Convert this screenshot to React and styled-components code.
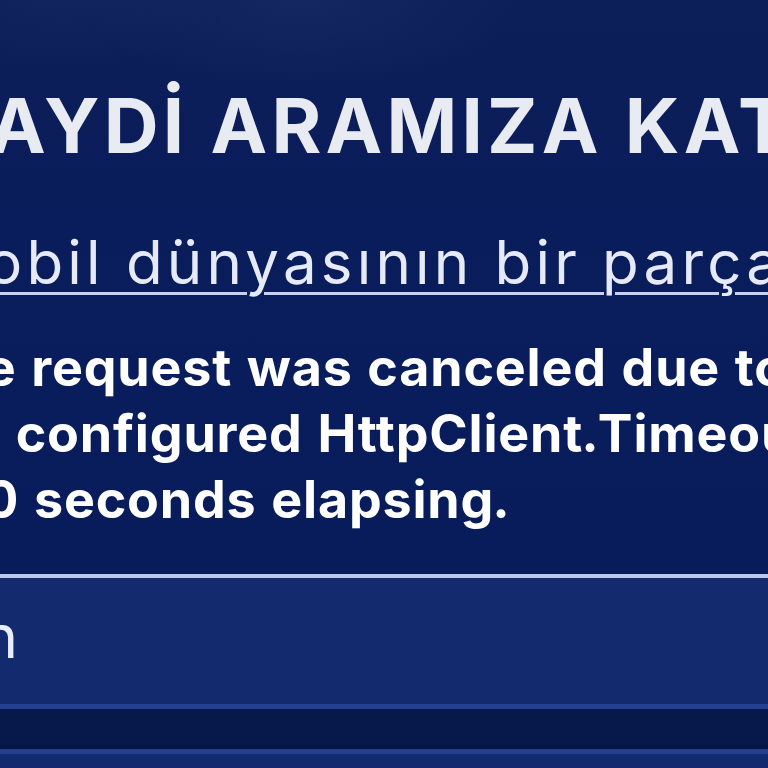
import React from "react";
import styled, { createGlobalStyle } from "styled-components";

const Global = createGlobalStyle`
  html, body { margin: 0; padding: 0; background: #0a1d5b; }
  body { font-family: Inter, "Noto Sans", sans-serif; }
  * { box-sizing: border-box; }
`;

const Page = styled.div`
  width: 768px;
  height: 768px;
  overflow: hidden;
  display: flex;
  flex-direction: column;
  background:
    radial-gradient(ellipse 220px 90px at 300px 0px, rgba(36, 54, 110, 0.35), rgba(36, 54, 110, 0) 100%),
    radial-gradient(ellipse 160px 70px at 60px 0px, rgba(36, 54, 110, 0.22), rgba(36, 54, 110, 0) 100%),
    linear-gradient(180deg, #0d1f57 0px, #0a1d5b 180px, #081c5c 574px);
`;

const Hero = styled.section`
  display: flex;
  flex-direction: column;
  padding-top: 87px;
  flex: 0 0 auto;
`;

const Line = styled.div`
  white-space: nowrap;
  margin-left: ${(p) => p.$shift}px;
`;

const Heading = styled(Line)`
  font-size: 76px;
  line-height: 76px;
  font-weight: 700;
  color: #e9ebf3;
  letter-spacing: 4.2px;
`;

const Subtitle = styled(Line)`
  margin-top: 69px;
  font-size: 60px;
  line-height: 60px;
  font-weight: 400;
  color: #e6eaf8;
  letter-spacing: 4.2px;
  text-decoration: underline;
  text-decoration-color: #c8d0f0;
  text-decoration-thickness: 3px;
  text-underline-offset: 8px;
`;

const ErrorBox = styled(Line)`
  margin-top: 43px;
  font-size: 52px;
  line-height: 66px;
  font-weight: 700;
  letter-spacing: 0.8px;
  color: #ffffff;
  font-variant-numeric: tabular-nums;
`;

const Divider = styled.div`
  margin-top: 40px;
  height: 6px;
  border-top: 1px solid #0f1a4e;
  border-bottom: 1px solid #1a2a66;
  background: #b9c7f0;
`;

const InputPanel = styled.div`
  height: 130px;
  background: #132b6e;
  border-bottom: 5px solid #24408f;
  display: flex;
  align-items: center;
`;

const InputEdge = styled.div`
  width: 18px;
  display: flex;
  justify-content: flex-end;
  padding-bottom: 12px;
`;

const InputText = styled.span`
  white-space: nowrap;
  font-size: 60px;
  line-height: 60px;
  font-weight: 400;
  color: #e8edff;
`;

const Band = styled.div`
  flex: 0 0 auto;
  height: 45px;
  background: linear-gradient(180deg, #07184b 0%, #07184b 85%, #051340 100%);
  border-bottom: 5px solid #24408f;
`;

const Rest = styled.div`
  flex: 1 1 auto;
  background: #132b6e;
`;

export default function App() {
  return (
    <>
      <Global />
      <Page>
        <Hero>
          <Heading $shift={-72}>HAYDİ ARAMIZA KATIL</Heading>
          <Subtitle $shift={-184}>Otomobil dünyasının bir parçası ol</Subtitle>
          <ErrorBox $shift={-84}>
            The request was canceled due to
            <br />
            the configured HttpClient.Timeout of
            <br />
            100 seconds elapsing.
          </ErrorBox>
        </Hero>
        <Divider />
        <InputPanel>
          <InputEdge>
            <InputText>Ad Soyad giriniz veya Giriş yapın</InputText>
          </InputEdge>
        </InputPanel>
        <Band />
        <Rest />
      </Page>
    </>
  );
}
